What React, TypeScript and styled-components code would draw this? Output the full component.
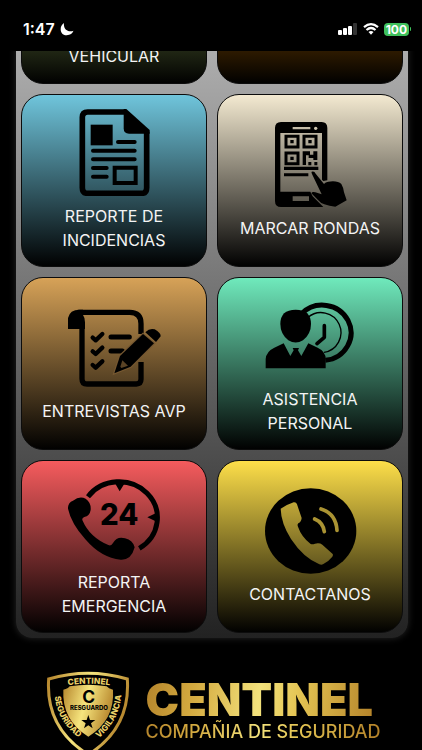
import React, { useLayoutEffect, useRef } from "react";
import styled, { createGlobalStyle } from "styled-components";

const GlobalStyle = createGlobalStyle`
  * { box-sizing: border-box; }
  body { margin: 0; background: #000; }
`;

const Screen = styled.div`
  display: flex;
  flex-direction: column;
  height: 100vh;
  background: #000;
  font-family: Inter, "Open Sans", sans-serif;
`;

const StatusBar = styled.header`
  flex: none;
  display: flex;
  align-items: center;
  justify-content: space-between;
  height: 51px;
  padding: 7px 11px 0 23px;
  color: #fff;
`;

const StatusGroup = styled.div<{ $gap: number }>`
  display: flex;
  align-items: center;
  gap: ${(p) => p.$gap}px;
`;

const Clock = styled.time`
  font-size: 16px;
  font-weight: 600;
  line-height: 20px;
`;

const BatteryShell = styled.div`
  display: flex;
  align-items: center;
  gap: 1px;
`;

const BatteryLevel = styled.span`
  padding: 0 2px;
  border-radius: 4px;
  background: #3fc15c;
  font-size: 12px;
  font-weight: 700;
  line-height: 13px;
`;

const BatteryTip = styled.span`
  width: 1px;
  height: 4px;
  border-radius: 0 1px 1px 0;
  background: #3fc15c;
`;

const Scroller = styled.main`
  flex: 1;
  min-height: 0;
  overflow-y: auto;
  scrollbar-width: none;
`;

const Panel = styled.nav`
  display: grid;
  grid-template-columns: 1fr 1fr;
  grid-auto-rows: minmax(173px, auto);
  gap: 10px;
  margin: 0 14px 0 16px;
  padding: 6px 5px 5px;
  border-radius: 16px;
  background: linear-gradient(#d0d0d0, #222);
  box-shadow: 0 0 7px #262626;
`;

const Tile = styled.button<{ $tint: string; $end?: boolean }>`
  display: flex;
  flex-direction: column;
  align-items: center;
  justify-content: ${(p) => (p.$end ? "flex-end" : "center")};
  gap: 8px;
  padding: ${(p) => (p.$end ? "0 16px 15px" : "0 16px")};
  border: 1px solid #0c0c0c;
  border-radius: 22px;
  background: linear-gradient(${(p) => p.$tint}, #000) border-box;
  color: #f4f4f4;
  font-family: inherit;
  cursor: pointer;
`;

const TileLabel = styled.span<{ $narrow?: boolean }>`
  max-width: ${(p) => (p.$narrow ? "116px" : "none")};
  font-size: 16px;
  font-weight: 400;
  line-height: 24px;
  text-align: center;
`;

const TileIcon = styled.svg`
  flex: none;
  width: 93px;
  height: 87px;
`;

const Footer = styled.footer`
  display: flex;
  justify-content: center;
  gap: 16px;
  margin-top: 32px;
  padding: 0 24px 24px 28px;
`;

const Shield = styled.svg`
  flex: none;
  width: 84px;
  height: 100px;
`;

const Wordmark = styled.div`
  display: flex;
  flex-direction: column;
  padding-top: 10px;
  white-space: nowrap;
`;

const gold = "linear-gradient(100deg, #b5852c, #d3a93f 20%, #f3e27c 48%, #e3c352 65%, #b07d26)";

const BrandName = styled.strong`
  background: ${gold};
  background-clip: text;
  color: transparent;
  font-size: 45px;
  font-weight: 900;
  line-height: 40px;
`;

const BrandLine = styled.span`
  background: ${gold};
  background-clip: text;
  color: transparent;
  font-size: 18px;
  font-weight: 500;
  line-height: 24px;
`;

const ReportIcon = () => (
  <TileIcon viewBox="157 72 279 261" aria-hidden="true">
    <path d="M326 81H216Q200 81 200 97V308Q200 325 216 325H378Q393 325 393 308V140" fill="none" stroke="#000" strokeWidth="17" />
    <path d="M324 72h8l70 63v11h-62q-16 0-16-16z" />
    <path d="M225 119h66v62h-66z" />
    <path d="M307 171h50M232 197h125M232 223h125M232 249h41M232 275h41" stroke="#000" strokeWidth="12" strokeLinecap="round" />
    <path d="M297 248h63v46h-63z" fill="none" stroke="#000" strokeWidth="12" />
  </TileIcon>
);

const QrPhoneIcon = () => (
  <TileIcon viewBox="160 108 279 261" aria-hidden="true">
    <path fillRule="evenodd" d="M211 111H333Q350 111 350 129V286L338 288L334 284V144H209V320H299L306 334L338 366H211Q193 366 193 348V129Q193 111 211 111ZM246 126v7h53v-7zM246 334v14h49v-14z" />
    <circle cx="315" cy="130" r="5" fill="#cfc6b0" />
    <path d="M226 154h36v32h-36zM280 154h36v32h-36zM226 204h36v32h-36z" fill="none" stroke="#000" strokeWidth="9" />
    <path d="M239 165h10v10h-10zM293 165h10v10h-10zM239 215h10v10h-10zM276 199h22v10h10v-10h12v26h-12v-6h-14v-8h-8v29h-10zM293 231h9v10h-9zM311 231h9v10h-9z" />
    <path d="M220 245h103v10H220zM220 265h73v9h-73z" />
    <path d="M303 260q8-3 12 6l25 31q4-6 13-7 28-4 39 7 7 12 8 25l8 24-34 19q-18-1-33-7-11-3-19-13l-20-20q2-6 12-3l19 6-28-59q-4-7-2-9z" />
  </TileIcon>
);

const ChecklistIcon = () => (
  <TileIcon viewBox="157 102 279 261" aria-hidden="true">
    <path d="M186 127H342Q376 127 376 161V184L376 192M376 276V328Q376 342 362 342H214Q199 342 199 326V158" fill="none" stroke="#000" strokeWidth="16" />
    <path d="M156 177v-22q0-36 36-36h10v16q6 8 6 22v20z" />
    <path d="M231 203l9 8 20-19M231 244l9 8 20-19M231 285l9 8 20-19" fill="none" stroke="#000" strokeWidth="13" strokeLinecap="round" strokeLinejoin="round" />
    <path d="M286 201h55M286 243h34" stroke="#000" strokeWidth="15" strokeLinecap="round" />
    <path d="M296 310l17-52 69-66 33 28-70 70-49 20z" stroke="#765831" strokeWidth="7" />
    <path d="M296 310l17-52 69-66 33 28-70 70-49 20z" />
    <path d="M320 271l17 16-20 7-3-4z" fill="#5a4325" />
    <path d="M389 187q13-14 28-9 19 11 18 21l-14 17z" />
  </TileIcon>
);

const AttendanceIcon = () => (
  <TileIcon viewBox="160 66 279 261" aria-hidden="true">
    <path d="M272 132A86 83 0 1 1 344 271" fill="none" stroke="#000" strokeWidth="15" />
    <path d="M292 142A60 60 0 1 1 340 247" fill="none" stroke="#000" strokeWidth="4" />
    <path d="M341 167v35l-22 19" fill="none" stroke="#000" strokeWidth="11" strokeLinecap="round" strokeLinejoin="round" />
    <path d="M255 119q46 0 46 43 0 30-24 49-22 13-44 0-24-19-24-49 0-43 46-43z" />
    <path d="M165 295v-28q2-23 26-34l28-13 20 38 10-17-3-7h19l-3 7 10 17 21-38 28 13q24 11 24 34v28z" />
  </TileIcon>
);

const EmergencyIcon = () => (
  <TileIcon viewBox="157 61 279 261" aria-hidden="true">
    <path d="M217 126A115 108 0 1 1 371 281" fill="none" stroke="#000" strokeWidth="15" />
    <path d="M298 86h29l-15 24zM423 174v27l-28-13z" />
    <path d="M172 138q20-16 38-6 17 12 15 34-3 18-19 21-9 3-5 11 21 49 77 73 9 4 14-6 12-21 36-14 24 6 29 27-10 39-42 37-58-5-106-61-43-49-52-92-1-18 15-24z" />
    <text x="311" y="212" textAnchor="middle" fontFamily="Inter, sans-serif" fontSize="88" fontWeight="800">24</text>
  </TileIcon>
);

const ContactIcon = () => (
  <TileIcon viewBox="160 97 279 261" aria-hidden="true">
    <defs>
      <linearGradient id="receiver" x1="0" y1="0" x2="0" y2="1">
        <stop offset="0" stopColor="#c0a738" />
        <stop offset="1" stopColor="#665a20" />
      </linearGradient>
    </defs>
    <ellipse cx="300" cy="229" rx="137" ry="128" />
    <path d="M210 162q18-12 39-19 8-1 10 6l14 41q-1 12-10 16-4 3-1 10 10 30 38 52 6 2 13-1 14-3 22 3l31 28q2 3-1 8-11 14-28 23-5 2-11 0-48-20-85-76-30-48-31-91z" fill="url(#receiver)" />
    <path d="M331 163q45 14 48 64M312 193q25 10 29 38" fill="none" stroke="#aa9333" strokeWidth="11" strokeLinecap="round" />
  </TileIcon>
);

const ShieldLogo = () => (
  <Shield viewBox="25 48 252 300" role="img" aria-label="Centinel">
    <defs>
      <linearGradient id="shieldGold" x1="0" y1="0" x2="1" y2="0.3">
        <stop offset="0" stopColor="#b5852c" />
        <stop offset="0.5" stopColor="#f6e57e" />
        <stop offset="1" stopColor="#b98a30" />
      </linearGradient>
      <path id="arcTop" d="M70 98Q152 80 238 98" />
      <path id="arcLeft" d="M50 104Q50 206 142 264" />
      <path id="arcRight" d="M164 266Q252 208 252 100" />
    </defs>
    <path d="M33 75Q151 40 269 75Q279 222 152 302Q23 222 33 75z" fill="#000" stroke="url(#shieldGold)" strokeWidth="9" />
    <path d="M77 107q15-3 19-10 56-10 111 0 5 7 19 10 6 91-74 141-80-50-75-141z" fill="url(#shieldGold)" />
    <g fill="#ecd168" fontFamily="Inter, sans-serif" fontWeight="800">
      <text textAnchor="middle" fontSize="25"><textPath href="#arcTop" startOffset="50%">CENTINEL</textPath></text>
      <text textAnchor="middle" fontSize="25"><textPath href="#arcLeft" startOffset="50%">SEGURIDAD</textPath></text>
      <text textAnchor="middle" fontSize="25"><textPath href="#arcRight" startOffset="50%">VIGILANCIA</textPath></text>
    </g>
    <g textAnchor="middle" fontFamily="Inter, sans-serif" fontWeight="700">
      <text x="153" y="147" fontSize="52">C</text>
      <text x="154" y="169" fontSize="18" fontWeight="800">RESGUARDO</text>
    </g>
    <path d="M152 183l5 15h16l-13 10 5 15-13-9-13 9 5-15-13-10h16z" />
  </Shield>
);

const tiles: { label: string; tint: string; icon: React.ReactNode; narrow?: boolean }[] = [
  { label: "REPORTE DE INCIDENCIAS", tint: "#70c6dd", icon: <ReportIcon />, narrow: true },
  { label: "MARCAR RONDAS", tint: "#f5ebd2", icon: <QrPhoneIcon /> },
  { label: "ENTREVISTAS AVP", tint: "#d8a358", icon: <ChecklistIcon /> },
  { label: "ASISTENCIA PERSONAL", tint: "#70ebbd", icon: <AttendanceIcon />, narrow: true },
  { label: "REPORTA EMERGENCIA", tint: "#f75c5e", icon: <EmergencyIcon />, narrow: true },
  { label: "CONTACTANOS", tint: "#ffe04a", icon: <ContactIcon /> },
];

export default function App() {
  const scroller = useRef<HTMLElement>(null);

  useLayoutEffect(() => {
    if (scroller.current) scroller.current.scrollTop = 146;
  }, []);

  return (
    <Screen>
      <GlobalStyle />
      <StatusBar>
        <StatusGroup $gap={5}>
          <Clock>1:47</Clock>
          <svg width="14" height="14" viewBox="0 0 14 14" aria-hidden="true">
            <path d="M4 1C-1 4-.5 13 6.500 13.200 10 13.300 12.600 11.500 13.500 8.800 9 10.500 3 8 4 1z" fill="#fff" />
          </svg>
        </StatusGroup>
        <StatusGroup $gap={5}>
          <svg width="20" height="12" viewBox="0 0 20 12" aria-hidden="true">
            <g fill="#fff">
              <rect x="0" y="7" width="4" height="5" rx="1" />
              <rect x="5" y="5" width="4" height="7" rx="1" />
              <rect x="10" y="3" width="4" height="9" rx="1" />
              <rect x="15" y="0" width="4" height="12" rx="1" fill="#333" />
            </g>
          </svg>
          <svg width="16" height="12" viewBox="0 0 16 12" aria-hidden="true">
            <g fill="none" stroke="#fff" strokeWidth="2.200">
              <path d="M1 4.200Q8-1.800 15 4.200" />
              <path d="M3.500 7Q8 3 12.500 7" />
            </g>
            <path d="M5.500 9Q8 7 10.500 9L8 11.800z" fill="#fff" />
          </svg>
          <BatteryShell>
            <BatteryLevel>100</BatteryLevel>
            <BatteryTip />
          </BatteryShell>
        </StatusGroup>
      </StatusBar>
      <Scroller ref={scroller}>
        <Panel>
          <Tile type="button" $tint="#a8c869" $end>
            <TileLabel>VEHICULAR</TileLabel>
          </Tile>
          <Tile type="button" $tint="#ed8900" $end />
          {tiles.map((t) => (
            <Tile key={t.label} type="button" $tint={t.tint}>
              {t.icon}
              <TileLabel $narrow={t.narrow}>{t.label}</TileLabel>
            </Tile>
          ))}
        </Panel>
        <Footer>
          <ShieldLogo />
          <Wordmark>
            <BrandName>CENTINEL</BrandName>
            <BrandLine>COMPAÑIA DE SEGURIDAD</BrandLine>
          </Wordmark>
        </Footer>
      </Scroller>
    </Screen>
  );
}
